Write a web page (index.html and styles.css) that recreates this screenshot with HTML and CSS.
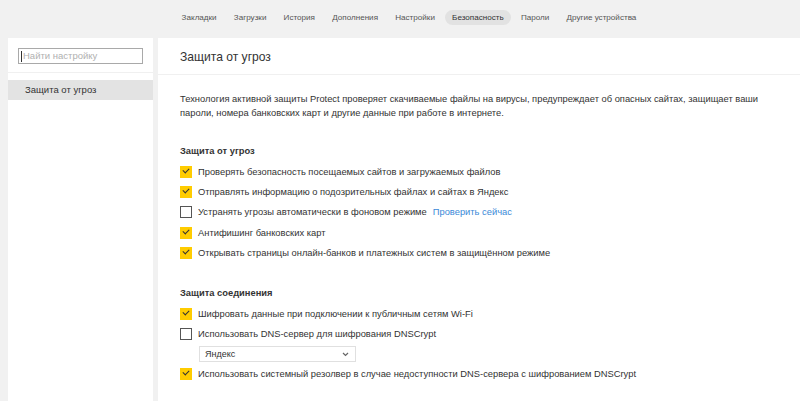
FILE: index.html
```html
<!DOCTYPE html>
<html lang="ru">
<head>
    <meta charset="UTF-8">
    <title>Настройки — Безопасность</title>
    <link rel="stylesheet" href="styles.css">
</head>
<body>
    <nav class="topnav">
        <a href="#">Закладки</a>
        <a href="#">Загрузки</a>
        <a href="#">История</a>
        <a href="#">Дополнения</a>
        <a href="#">Настройки</a>
        <a href="#" class="active">Безопасность</a>
        <a href="#">Пароли</a>
        <a href="#">Другие устройства</a>
    </nav>

    <div class="layout">
        <aside class="sidebar">
            <div class="search-wrap">
                <div class="search"><span class="caret"></span>Найти настройку</div>
            </div>
            <div class="side-item selected">Защита от угроз</div>
        </aside>

        <main class="main">
            <h1 class="title">Защита от угроз</h1>
            <div class="body">
                <p class="intro">Технология активной защиты Protect проверяет скачиваемые файлы на вирусы, предупреждает об опасных сайтах, защищает ваши<br>пароли, номера банковских карт и другие данные при работе в интернете.</p>

                <section class="group">
                    <h2>Защита от угроз</h2>
                    <label class="row"><span class="box on"></span>Проверять безопасность посещаемых сайтов и загружаемых файлов</label>
                    <label class="row"><span class="box on"></span>Отправлять информацию о подозрительных файлах и сайтах в Яндекс</label>
                    <label class="row"><span class="box"></span>Устранять угрозы автоматически в фоновом режиме <a href="#" class="link">Проверить сейчас</a></label>
                    <label class="row"><span class="box on"></span>Антифишинг банковских карт</label>
                    <label class="row"><span class="box on"></span>Открывать страницы онлайн-банков и платежных систем в защищённом режиме</label>
                </section>

                <section class="group second">
                    <h2>Защита соединения</h2>
                    <label class="row"><span class="box on"></span>Шифровать данные при подключении к публичным сетям Wi-Fi</label>
                    <label class="row"><span class="box"></span>Использовать DNS-сервер для шифрования DNSCrypt</label>
                    <div class="select">Яндекс
                        <svg class="chev" width="7" height="5" viewBox="0 0 7 5"><path d="M1 1l2.5 2.5L6 1" fill="none" stroke="#666" stroke-width="1.2"/></svg>
                    </div>
                    <label class="row"><span class="box on"></span>Использовать системный резолвер в случае недоступности DNS-сервера с шифрованием DNSCrypt</label>
                </section>
            </div>
        </main>
    </div>
</body>
</html>
```

FILE: styles.css
```css
body {
    margin: 0;
    background: #f1f1f1;
    font-family: "Liberation Sans", Arial, sans-serif;
    color: #333;
    height: 401px;
    overflow: hidden;
}

.topnav {
    height: 38px;
    display: flex;
    align-items: center;
    justify-content: center;
    padding-left: 18px;
    padding-bottom: 3px;
    box-sizing: border-box;
}
.topnav a {
    font-size: 8.1px;
    color: #555;
    text-decoration: none;
    padding: 3px 7px 3px;
    margin: 0 1.6px;
    border-radius: 8px;
}
.topnav a.active {
    background: #e2e2e2;
    color: #333;
}

.layout {
    display: flex;
    gap: 5px;
    padding-left: 8px;
    height: 363px;
}

.sidebar {
    width: 145px;
    background: #fff;
}
.search-wrap {
    height: 35px;
    border-bottom: 1px solid #f0f0f0;
    padding: 10px 0 0 10px;
    box-sizing: border-box;
}
.search {
    width: 125px;
    height: 16px;
    box-sizing: border-box;
    border: 1px solid #a9a9a9;
    font-size: 9.5px;
    color: #b0b0b0;
    line-height: 14px;
    padding-left: 2px;
    display: flex;
    align-items: center;
}
.caret {
    width: 1px;
    height: 11px;
    background: #333;
    margin-right: 1px;
}
.side-item {
    margin-top: 7px;
    height: 20px;
    line-height: 20px;
    padding-left: 17px;
    font-size: 9.5px;
    color: #333;
}
.side-item.selected {
    background: #e3e3e3;
}

.main {
    flex: 1;
    background: #fff;
}
.title {
    margin: 0;
    height: 37px;
    box-sizing: border-box;
    border-bottom: 1px solid #f0f0f0;
    padding: 12px 0 0 22px;
    font-size: 12.1px;
    font-weight: normal;
    color: #333;
}
.body {
    padding: 0 22px;
}
.intro {
    margin: 17px 0 0;
    font-size: 9.35px;
    line-height: 14px;
    color: #333;
}

.group {
    margin-top: 24px;
}
.group.second {
    margin-top: 23px;
}
.group h2 {
    margin: 0 0 4px;
    font-size: 9.35px;
    font-weight: bold;
    line-height: 14px;
}
.row {
    display: flex;
    align-items: center;
    height: 20.2px;
    font-size: 9.35px;
    color: #333;
}
.box {
    width: 12px;
    height: 12px;
    box-sizing: border-box;
    border: 1px solid #555;
    background: #fff;
    margin-right: 6px;
    flex-shrink: 0;
    position: relative;
}
.box.on {
    border: none;
    background: #fc0;
}
.box.on::after {
    content: "";
    position: absolute;
    left: 3px;
    top: 2px;
    width: 5px;
    height: 3px;
    border-left: 1.5px solid #333;
    border-bottom: 1.5px solid #333;
    transform: rotate(-45deg);
}
.link {
    color: #3b8ad8;
    text-decoration: none;
    margin-left: 6px;
}

.select {
    margin: 2px 0 2px 19px;
    width: 157px;
    height: 16px;
    box-sizing: border-box;
    border: 1px solid #e0e0e0;
    font-size: 9px;
    line-height: 14px;
    padding-left: 5px;
    color: #333;
    position: relative;
}
.chev {
    position: absolute;
    right: 6px;
    top: 5px;
}
```
